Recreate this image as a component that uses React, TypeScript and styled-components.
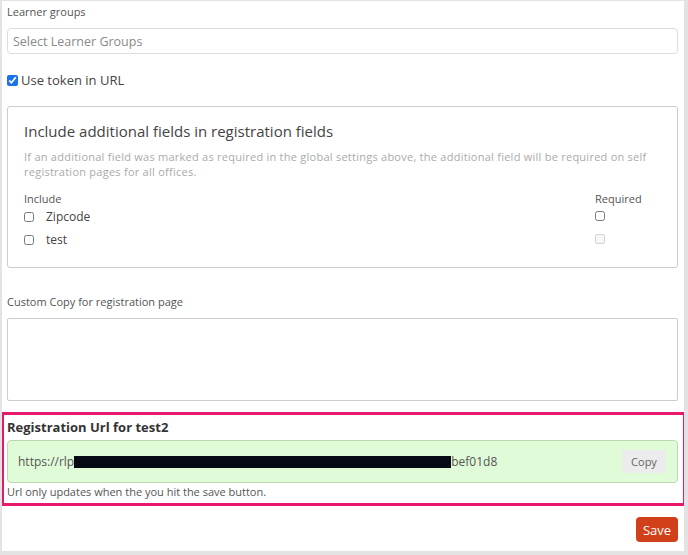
import styled, { createGlobalStyle } from "styled-components";

const GlobalStyle = createGlobalStyle`
	html, body {
		margin: 0;
		padding: 0;
		background: #fff;
	}
	body {
		font-family: "Open Sans", "Liberation Sans", sans-serif;
		color: #444;
	}
`;

const fields = [
	{ name: "Zipcode", disabled: false },
	{ name: "test", disabled: true },
];

const App = () => {
	return (
		<>
			<GlobalStyle />
			<Frame>
				<Label>Learner groups</Label>
				<Select>Select Learner Groups</Select>

				<TokenRow>
					<Check type="checkbox" defaultChecked $size={11} />
					<span>Use token in URL</span>
				</TokenRow>

				<FieldsBox>
					<BoxTitle>Include additional fields in registration fields</BoxTitle>
					<Hint>
						If an additional field was marked as required in the global settings above, the
						additional field will be required on self registration pages for all offices.
					</Hint>

					<FieldGrid>
						<ColHead>Include</ColHead>
						<ColHead>Required</ColHead>
						{fields.map((f) => (
							<FieldRow key={f.name}>
								<FieldName>
									<Check type="checkbox" $size={10} />
									<span>{f.name}</span>
								</FieldName>
								<Check type="checkbox" $size={10} disabled={f.disabled} />
							</FieldRow>
						))}
					</FieldGrid>
				</FieldsBox>

				<Label $top={27}>Custom Copy for registration page</Label>
				<TextArea />

				<Highlight>
					<UrlTitle>Registration Url for test2</UrlTitle>
					<UrlBox>
						<UrlText>
							https://rlp
							<Redacted />
							bef01d8
						</UrlText>
						<CopyButton>Copy</CopyButton>
					</UrlBox>
					<Note>Url only updates when the you hit the save button.</Note>
				</Highlight>

				<Footer>
					<SaveButton>Save</SaveButton>
				</Footer>
			</Frame>
		</>
	);
};

const Frame = styled.div`
	width: 688px;
	height: 555px;
	box-sizing: border-box;
	border-style: solid;
	border-color: #e3e3e3;
	border-width: 1px 4px 4px 2px;
	padding: 0 6px 0 5px;
	overflow: hidden;
	display: flex;
	flex-direction: column;
`;

const Label = styled.div<{ $top?: number }>`
	font-size: 11px;
	line-height: 14px;
	color: #555;
	margin-top: ${(p) => p.$top ?? 4}px;
`;

const Select = styled.div`
	margin-top: 9px;
	height: 26px;
	box-sizing: border-box;
	border: 1px solid #ddd;
	border-radius: 4px;
	padding: 0 5px;
	display: flex;
	align-items: center;
	font-size: 12.5px;
	color: #8a8a8a;
`;

const Check = styled.input<{ $size: number }>`
	width: ${(p) => p.$size}px;
	height: ${(p) => p.$size}px;
	margin: 0;
	accent-color: #1a73e8;
`;

const TokenRow = styled.label`
	display: flex;
	align-items: center;
	gap: 3px;
	margin-top: 19px;
	height: 14px;
	font-size: 13px;
	color: #444;
`;

const FieldsBox = styled.div`
	margin-top: 19px;
	height: 162px;
	box-sizing: border-box;
	border: 1px solid #ccc;
	border-radius: 3px;
	padding: 14px 19px 0 16px;
`;

const BoxTitle = styled.div`
	font-size: 15px;
	line-height: 20px;
	color: #444;
`;

const Hint = styled.p`
	margin: 8px 0 0;
	font-size: 11px;
	letter-spacing: 0.25px;
	line-height: 15px;
	color: #aaa;
`;

const FieldGrid = styled.div`
	margin-top: 13px;
	display: grid;
	grid-template-columns: 1fr 63px;
`;

const ColHead = styled.div`
	font-size: 11px;
	line-height: 14px;
	color: #555;
	margin-bottom: -1px;
`;

const FieldRow = styled.div`
	display: contents;

	& > * {
		height: 23px;
		align-self: center;
	}
	& > input {
		height: 10px;
		margin-top: 6px;
		margin-bottom: 7px;
	}
`;

const FieldName = styled.label`
	display: flex;
	align-items: center;
	gap: 12px;
	font-size: 12px;
	color: #444;
`;

const TextArea = styled.div`
	margin-top: 9px;
	height: 83px;
	box-sizing: border-box;
	border: 1px solid #ccc;
	border-radius: 2px;
`;

const Highlight = styled.section`
	margin: 11px -8px 0 -6px;
	height: 94px;
	box-sizing: border-box;
	border: 3px solid #e8186c;
	padding: 4px 5px 0 3px;
	display: flex;
	flex-direction: column;
`;

const UrlTitle = styled.div`
	font-size: 13px;
	font-weight: 700;
	line-height: 16px;
	color: #333;
`;

const UrlBox = styled.div`
	margin-top: 5px;
	height: 43px;
	box-sizing: border-box;
	background: #e0fbd8;
	border: 1px solid #bcd9b2;
	border-radius: 4px;
	padding: 0 11px 0 10px;
	display: flex;
	align-items: center;
	justify-content: space-between;
`;

const UrlText = styled.div`
	display: flex;
	align-items: center;
	font-size: 12px;
	color: #555;
`;

const Redacted = styled.span`
	display: inline-block;
	width: 377px;
	height: 12px;
	background: #050a14;
`;

const CopyButton = styled.button`
	width: 44px;
	height: 23px;
	border: none;
	border-radius: 2px;
	background: #ececec;
	font-family: inherit;
	font-size: 11px;
	color: #666;
	padding: 0;
`;

const Note = styled.div`
	margin-top: 2px;
	font-size: 11px;
	line-height: 14px;
	color: #555;
`;

const Footer = styled.div`
	display: flex;
	justify-content: flex-end;
	margin-top: 11px;
`;

const SaveButton = styled.button`
	width: 42px;
	height: 25px;
	border: none;
	border-radius: 4px;
	background: #d2401a;
	color: #fff;
	font-family: inherit;
	font-size: 13px;
	padding: 0;
`;

export default App;
